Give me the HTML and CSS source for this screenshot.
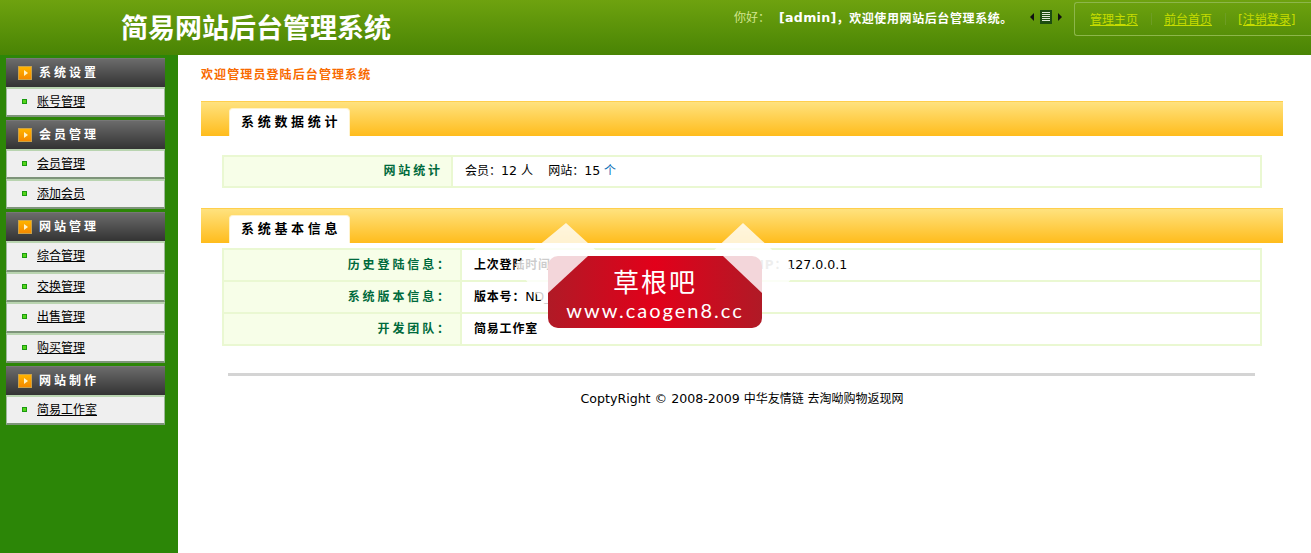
FILE: index.html
```html
<!DOCTYPE html>
<html lang="zh-CN">
<head>
    <meta charset="UTF-8">
    <title>简易网站后台管理系统</title>
    <link rel="stylesheet" href="styles.css">
</head>
<body>

<div class="header">
    <div class="logo">简易网站后台管理系统</div>
    <div class="topinfo">
        <span class="hello">你好：</span>
        <b class="admin">[admin]</b><b class="welcome">，欢迎使用网站后台管理系统。</b>
        <svg class="menu-switch" width="34" height="14" viewBox="0 0 34 14">
            <path d="M1 7l4-4v8z" fill="#111"/>
            <rect x="11" y="0" width="12" height="14" fill="#1d4d10"/>
            <path d="M13 2.5h8M13 4.5h8M13 6.5h8M13 8.5h8M13 10.5h8" stroke="#dfe9d6" stroke-width="1"/>
            <path d="M33 7l-4-4v8z" fill="#111"/>
        </svg>
    </div>
    <div class="toplinks">
        <a href="#">管理主页</a><i></i>
        <a href="#">前台首页</a><i></i>
        <a href="#">[注销登录]</a>
    </div>
</div>

<div class="wrap">
    <div class="sidebar">
        <div class="menu-title"><span class="arrow"></span>系统设置</div>
        <a class="menu-item" href="#">账号管理</a>

        <div class="menu-title"><span class="arrow"></span>会员管理</div>
        <a class="menu-item" href="#">会员管理</a>
        <a class="menu-item" href="#">添加会员</a>

        <div class="menu-title"><span class="arrow"></span>网站管理</div>
        <a class="menu-item tall" href="#">综合管理</a>
        <a class="menu-item" href="#">交换管理</a>
        <a class="menu-item tall" href="#">出售管理</a>
        <a class="menu-item" href="#">购买管理</a>

        <div class="menu-title"><span class="arrow"></span>网站制作</div>
        <a class="menu-item" href="#">简易工作室</a>
    </div>

    <div class="main">
        <div class="notice">欢迎管理员登陆后台管理系统</div>

        <div class="bar"><span class="tab">系统数据统计</span></div>
        <table class="info stat">
            <tr>
                <th>网站统计</th>
                <td>会员：<span class="num">12</span> <a href="#">人</a> &nbsp;&nbsp; 网站：<span class="num">15</span> <a class="blue" href="#">个</a></td>
            </tr>
        </table>

        <div class="bar bar2"><span class="tab">系统基本信息</span></div>
        <table class="info base">
            <tr>
                <th>历史登陆信息：</th>
                <td><b>上次登陆时间：</b><span class="ip"><b>IP：</b><span class="num">127.0.0.1</span></span></td>
            </tr>
            <tr>
                <th>系统版本信息：</th>
                <td><b>版本号：</b><span class="num">ND_1.0</span></td>
            </tr>
            <tr>
                <th>开发团队：</th>
                <td><b>简易工作室</b></td>
            </tr>
        </table>

        <div class="rule"></div>
        <div class="copy"><span class="num">CoptyRight © 2008-2009</span> <a href="#">中华友情链</a> <a href="#">去淘呦购物返现网</a></div>
    </div>
</div>

<!-- 水印 -->
<div class="stamp">
    <svg width="300" height="110" viewBox="0 0 300 110">
        <polygon points="56,1 90,32 200,32 233,1 287,51 252,88 38,88 5,43" fill="#fff" fill-opacity="0.8"/>
        <rect x="38" y="34" width="214" height="72" rx="10" fill="#f3d6da"/>
        <path d="M78 34H213L252 71V96a10 10 0 0 1-10 10H48a10 10 0 0 1-10-10V71z" fill="url(#red)"/>
        <defs>
            <linearGradient id="red">
                <stop offset="0" stop-color="#b01a26"/>
                <stop offset="0.5" stop-color="#e2001a"/>
                <stop offset="1" stop-color="#b01a26"/>
            </linearGradient>
        </defs>
    </svg>
    <div class="stamp-name">草根吧</div>
    <div class="stamp-url">www.caogen8.cc</div>
</div>

</body>
</html>
```

FILE: styles.css
```css
body {
    margin: 0;
    font-family: "DejaVu Sans", "Noto Sans CJK SC", sans-serif;
    font-size: 12px;
    color: #000;
    background: #fff;
}

a {
    color: #000;
}

.num {
    font-size: 12.6px;
}

.header {
    height: 55px;
    display: flex;
    background: linear-gradient(#6ea20f, #498404);
    overflow: hidden;
}

.logo {
    margin: 8px 0 0 121px;
    width: 613px;
    font-family: "Noto Sans CJK SC", sans-serif;
    font-size: 27px;
    font-weight: 700;
    line-height: 37px;
    color: #fff;
}

.topinfo {
    width: 340px;
    padding-top: 10px;
    line-height: 16px;
    white-space: nowrap;
    display: flex;
    align-items: flex-start;
}

.hello {
    color: #d3e58e;
    width: 45px;
}

.admin {
    color: #fff;
    font-size: 12.6px;
    letter-spacing: 0.3px;
}

.welcome {
    color: #fff;
    letter-spacing: 0.6px;
    font-family: "Noto Sans CJK SC", sans-serif;
}

.menu-switch {
    margin-left: 16px;
}

.toplinks {
    margin-top: 2px;
    height: 32px;
    flex: 1;
    display: flex;
    align-items: center;
    padding-left: 15px;
    border: 1px solid #8db64b;
    border-right: none;
    border-radius: 3px 0 0 3px;
    white-space: nowrap;
}

.toplinks a {
    color: #c6dc00;
    margin-top: -1px;
}

.toplinks i {
    width: 1px;
    height: 12px;
    background: #6d9d24;
    margin: 0 12px 0 13px;
}

.wrap {
    display: flex;
    height: 498px;
}

.sidebar {
    width: 178px;
    flex: none;
    box-sizing: border-box;
    padding: 3px 13px 0 6px;
    background: #2c8607;
}

.menu-title {
    height: 29px;
    box-sizing: border-box;
    margin-top: 3px;
    padding: 0 0 3px 12px;
    display: flex;
    align-items: center;
    color: #fff;
    font-weight: 700;
    letter-spacing: 3px;
    background: linear-gradient(#6b6b6b, #333);
    border-top: 1px solid #777;
}

.menu-title:first-child {
    margin-top: 0;
}

.arrow {
    width: 14px;
    height: 14px;
    box-sizing: border-box;
    margin: 3px 7px 0 0;
    border: 1px solid #c9a24a;
    background: linear-gradient(#ffb400, #f58a00);
    position: relative;
}

.arrow::after {
    content: "";
    position: absolute;
    left: 5px;
    top: 3px;
    border-left: 4px solid #fff3c8;
    border-top: 3px solid transparent;
    border-bottom: 3px solid transparent;
}

.menu-item {
    display: flex;
    align-items: center;
    height: 30px;
    box-sizing: border-box;
    background: #efefef;
    border: 1px solid #9db79a;
    border-top: 2px solid #b9d4b0;
    border-bottom: 2px solid #7e947a;
    padding: 0 0 4px 30px;
    position: relative;
    text-decoration: underline;
}

.menu-item.tall {
    height: 31px;
}

.menu-item::before {
    content: "";
    position: absolute;
    left: 15px;
    top: 10px;
    width: 3px;
    height: 3px;
    background: #55d41a;
    border: 1px solid #1a9a10;
}

.main {
    flex: 1;
    padding: 0 28px 0 23px;
}

.notice {
    margin-top: 12px;
    line-height: 16px;
    font-weight: 700;
    color: #f86a00;
    letter-spacing: 1.1px;
}

.bar {
    margin-top: 18px;
    height: 35px;
    box-sizing: border-box;
    padding: 6px 0 0 28px;
    background: linear-gradient(#ffe27e, #ffbc1c);
    border-top: 1px solid #ffcf4d;
    display: flex;
}

.bar2 {
    margin-top: 20px;
}

.tab {
    width: 121px;
    height: 28px;
    box-sizing: border-box;
    padding-left: 11px;
    background: #fff;
    border: 1px solid #fff3cc;
    border-bottom: none;
    border-radius: 4px 4px 0 0;
    line-height: 25px;
    font-size: 13px;
    font-weight: 700;
    letter-spacing: 3.7px;
    white-space: nowrap;
}

.info {
    border-collapse: collapse;
    margin-left: 21px;
    width: 1040px;
    border: 2px solid #eaf8d2;
}

.info th,
.info td {
    height: 26px;
    padding: 0 0 4px;
    border: 2px solid #eaf8d2;
    white-space: nowrap;
}

.info th {
    padding-right: 8px;
    text-align: right;
    color: #006a3c;
    background: #f7fee8;
    letter-spacing: 2.9px;
}

.stat {
    margin-top: 19px;
}

.stat th {
    width: 219px;
    height: 25px;
}

.stat td {
    height: 25px;
    padding-left: 12px;
}

.blue {
    color: #0b6db5;
    text-decoration: none;
}

.stat a {
    text-decoration: none;
}

.base {
    margin-top: 5px;
}

.base th {
    width: 228px;
}

.base td {
    padding-left: 12px;
    letter-spacing: 0.8px;
}

.base .num {
    letter-spacing: 0;
}

.ip {
    margin-left: 196px;
}

.ip b {
    color: #aaa;
}

.rule {
    margin: 27px 28px 0 27px;
    height: 3px;
    background: #d4d4d4;
}

.copy {
    margin-top: 14px;
    line-height: 17px;
    text-align: center;
}

.copy a {
    text-decoration: none;
}

.stamp {
    position: absolute;
    left: 510px;
    top: 222px;
    width: 300px;
    height: 110px;
    color: #fff;
    text-align: center;
}

.stamp svg {
    display: block;
}

.stamp-name {
    position: absolute;
    left: 38px;
    top: 43px;
    width: 214px;
    font-family: "Noto Sans CJK SC", sans-serif;
    font-size: 26px;
    line-height: 32px;
    letter-spacing: 2px;
}

.stamp-url {
    position: absolute;
    left: 38px;
    top: 77px;
    width: 214px;
    font-family: "Lato", sans-serif;
    font-size: 20px;
    line-height: 22px;
    letter-spacing: 2px;
}
```
